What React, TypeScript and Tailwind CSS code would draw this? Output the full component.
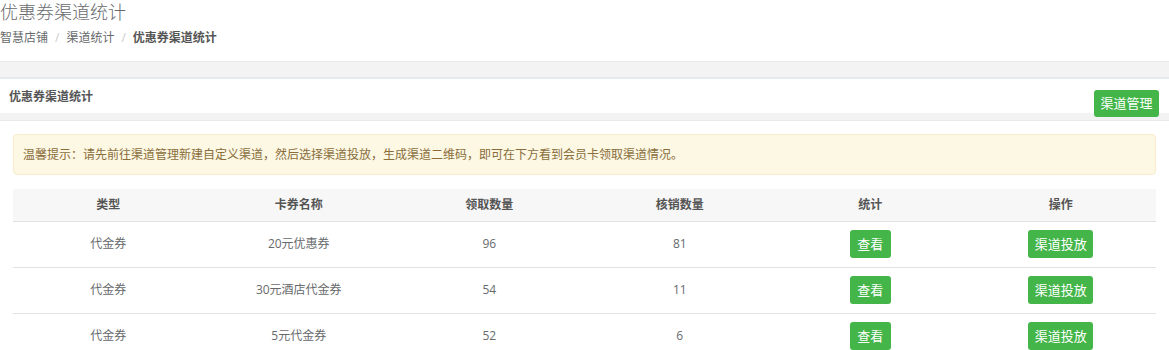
const rows = [
  { type: '代金券', name: '20元优惠券', got: 96, used: 81 },
  { type: '代金券', name: '30元酒店代金券', got: 54, used: 11 },
  { type: '代金券', name: '5元代金券', got: 52, used: 6 },
]

const headers = ['类型', '卡券名称', '领取数量', '核销数量', '统计', '操作']

function GreenButton({ label, width }: { label: string; width: string }) {
  return (
    <button
      className={`${width} h-[28px] inline-flex items-center justify-center rounded-[3px] bg-[#44b549] text-white text-[13px] leading-none`}
    >
      {label}
    </button>
  )
}

export default function App() {
  return (
    <div className="min-h-screen bg-white text-[12px] text-[#676a6c] font-['Open_Sans','Noto_Sans_CJK_SC',sans-serif]">
      {/* Page heading */}
      <div className="h-[61px]">
        <h2 className="text-[18px] leading-[24px] font-light text-[#676a6c]">优惠券渠道统计</h2>
        <div className="mt-[4px] flex items-center leading-[20px] text-[12px]">
          <span>智慧店铺</span>
          <span className="px-[7px] text-[#ccc]">/</span>
          <span>渠道统计</span>
          <span className="px-[7px] text-[#ccc]">/</span>
          <span className="font-bold text-[#555]">优惠券渠道统计</span>
        </div>
      </div>

      {/* Panel title */}
      <div className="border-t border-[#e7eaec] bg-[#f3f3f4] pt-[15px]">
        <div className="relative border-t-2 border-[#e7eaec] bg-white">
          <div className="h-[34px] pl-[9px] pt-[2px] flex items-center font-bold text-[12px] text-[#555]">
            优惠券渠道统计
          </div>
          <button className="absolute right-[10px] top-[11px] z-10 w-[65px] h-[27px] flex items-center justify-center rounded-[3px] bg-[#44b549] text-white text-[13px] leading-none">
            渠道管理
          </button>
        </div>
        <div className="h-[8px] border-b border-[#e7eaec]" />
      </div>

      {/* Content */}
      <div className="px-[13px] pt-[13px]">
        <div className="h-[41px] flex items-center px-[9px] border border-[#faebcc] bg-[#fcf8e3] rounded-[4px] text-[#8a6d3b]">
          温馨提示：请先前往渠道管理新建自定义渠道，然后选择渠道投放，生成渠道二维码，即可在下方看到会员卡领取渠道情况。
        </div>

        <table className="mt-[14px] w-full table-fixed border-collapse text-center">
          <thead>
            <tr className="h-[32px] bg-[#f7f7f7] border-b border-[#e2e2e2]">
              {headers.map(h => (
                <th key={h} className="font-bold text-[#555] p-0">{h}</th>
              ))}
            </tr>
          </thead>
          <tbody>
            {rows.map(r => (
              <tr key={r.name} className="h-[46px] border-b border-[#e2e2e2]">
                <td className="p-0">{r.type}</td>
                <td className="p-0">{r.name}</td>
                <td className="p-0">{r.got}</td>
                <td className="p-0">{r.used}</td>
                <td className="p-0"><GreenButton label="查看" width="w-[41px]" /></td>
                <td className="p-0"><GreenButton label="渠道投放" width="w-[65px]" /></td>
              </tr>
            ))}
          </tbody>
        </table>
      </div>
    </div>
  )
}
